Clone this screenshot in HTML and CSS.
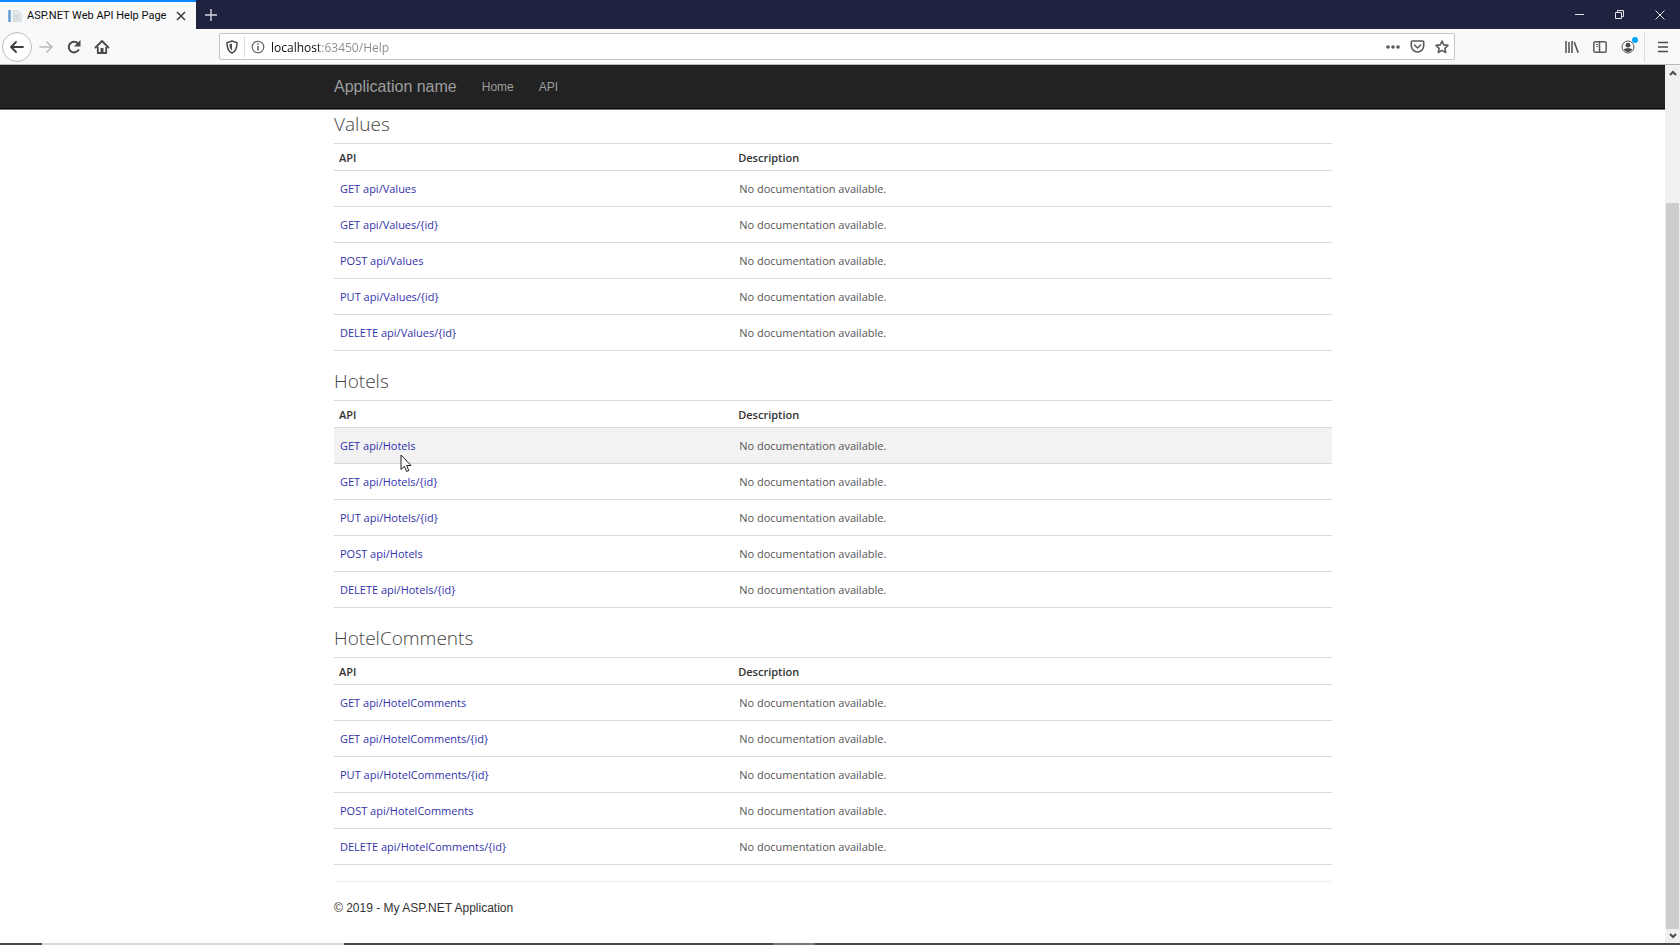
FILE: index.html
```html
<!DOCTYPE html>
<html lang="en">
<head>
<meta charset="utf-8">
<title>ASP.NET Web API Help Page</title>
<link rel="stylesheet" href="styles.css">
</head>
<body>
<div class="browser">
  <header class="chrome">
    <div class="tabstrip">
      <div class="tab">
        <svg class="favicon" width="14" height="14" viewBox="0 0 14 14"><path d="M1.500 1v12" stroke="#5b9bd0" stroke-width="2.400"/><path d="M5 1.500h5l3 3v8H5z" fill="#e6eaed" stroke="#d3dade"/><path d="M6 6h5M6 8h5M6 10h5" stroke="#c3cdd4"/></svg>
        <span class="tab-title">ASP.NET Web API Help Page</span>
        <button class="icon-btn" aria-label="Close tab"><svg width="10" height="10" viewBox="0 0 10 10"><path d="M1 1l8 8M9 1l-8 8" stroke="#3a3a3c" stroke-width="1.500"/></svg></button>
      </div>
      <button class="icon-btn new-tab" aria-label="New tab"><svg width="12" height="12" viewBox="0 0 12 12"><path d="M6 0v12M0 6h12" stroke="#d4d4dc" stroke-width="1.400"/></svg></button>
      <div class="window-controls">
        <button class="icon-btn" aria-label="Minimize"><svg width="10" height="10" viewBox="0 0 10 10"><path d="M0 4.500h9" stroke="#e4e4ea"/></svg></button>
        <button class="icon-btn" aria-label="Restore"><svg width="10" height="10" viewBox="0 0 10 10" fill="none" stroke="#e4e4ea"><path d="M.5 2.500h6v6h-6zM2.500 2.500v-2h6v6h-2"/></svg></button>
        <button class="icon-btn" aria-label="Close"><svg width="10" height="10" viewBox="0 0 10 10"><path d="M.5.5l9 9M9.500.5l-9 9" stroke="#e4e4ea"/></svg></button>
      </div>
    </div>
    <div class="toolbar">
      <div class="nav-buttons">
        <button class="icon-btn back" aria-label="Back"><svg width="16" height="14" viewBox="0 0 16 14" fill="none" stroke="#3c3c3e" stroke-width="1.800" stroke-linecap="round" stroke-linejoin="round"><path d="M14 7H2M7 2L2 7l5 5"/></svg></button>
        <button class="icon-btn nav-btn" aria-label="Forward" disabled><svg width="16" height="14" viewBox="0 0 16 14" fill="none" stroke="#b9b9bb" stroke-width="1.600" stroke-linecap="round" stroke-linejoin="round"><path d="M2 7h12M9 2l5 5-5 5"/></svg></button>
        <button class="icon-btn nav-btn" aria-label="Reload"><svg width="16" height="16" viewBox="0 0 16 16"><path d="M12.500 11A5.300 5.300 0 1 1 12 4.500" fill="none" stroke="#4a4a4c" stroke-width="2" stroke-linecap="round"/><path d="M14.500 1v6.500H8z" fill="#4a4a4c"/></svg></button>
        <button class="icon-btn nav-btn" aria-label="Home"><svg width="16" height="16" viewBox="0 0 16 16"><path d="M1.500 8.500L8 2l6.500 6.500" fill="none" stroke="#4a4a4c" stroke-width="1.800" stroke-linecap="round" stroke-linejoin="round"/><path d="M3.800 8v6h8.400V8" fill="none" stroke="#4a4a4c" stroke-width="1.800" stroke-linejoin="round"/><path d="M6.500 9h3v5h-3z" fill="#4a4a4c"/></svg></button>
      </div>
      <div class="urlbar">
        <button class="icon-btn shield" aria-label="Tracking protection"><svg width="12" height="14" viewBox="0 0 12 14"><path d="M6 1c2 1 3.500 1.300 5 1.400C11 8 9.500 11.500 6 13 2.500 11.500 1 8 1 2.400 2.500 2.300 4 2 6 1z" fill="none" stroke="#4a4a4c" stroke-width="1.500" stroke-linejoin="round"/><path d="M6 3.500v7C4.200 9.300 3.500 7 3.400 4.200 4.500 4.100 5.200 3.900 6 3.500z" fill="#4a4a4c"/></svg></button>
        <button class="icon-btn info" aria-label="Site information"><svg width="14" height="14" viewBox="0 0 14 14"><circle cx="7" cy="7" r="5.800" fill="none" stroke="#58585a" stroke-width="1.100"/><path d="M7 6v4.500M7 3.300v1.500" stroke="#58585a" stroke-width="1.500"/></svg></button>
        <input class="url" type="text" aria-label="Address" value="localhost:63450/Help">
        <div class="url-actions">
          <button class="icon-btn" aria-label="Page actions"><svg width="14" height="4" viewBox="0 0 14 4" fill="#5a5a5c"><circle cx="2" cy="2" r="1.800"/><circle cx="7" cy="2" r="1.800"/><circle cx="12" cy="2" r="1.800"/></svg></button>
          <button class="icon-btn" aria-label="Save to Pocket"><svg width="15" height="13" viewBox="0 0 14 13" fill="none" stroke="#5a5a5c" stroke-width="1.600" stroke-linecap="round" stroke-linejoin="round"><path d="M1.800 1h10.400a1 1 0 0 1 1 1v3.800a6.200 6.200 0 0 1-12.400 0V2a1 1 0 0 1 1-1z"/><path d="M4 5l3 3 3-3"/></svg></button>
          <button class="icon-btn" aria-label="Bookmark"><svg width="14" height="14" viewBox="0 0 14 14" fill="none" stroke="#5a5a5c" stroke-width="1.600" stroke-linejoin="round"><path d="M7 1l1.800 3.900 4.200.5-3.100 2.900.8 4.200L7 10.400l-3.700 2.100.8-4.200L1 5.400l4.200-.5z"/></svg></button>
        </div>
      </div>
      <div class="tools">
        <button class="icon-btn" aria-label="Library"><svg width="14" height="12" viewBox="0 0 14 12" fill="none" stroke="#4e4e50" stroke-width="1.500"><path d="M1 0v12M4 1v11M7 0v12M9.200 1l4 10.800"/></svg></button>
        <button class="icon-btn" aria-label="Sidebars"><svg width="14" height="12" viewBox="0 0 14 12" fill="none" stroke="#5a5a5c" stroke-width="1.500"><rect x=".8" y=".8" width="12.400" height="10.400" rx="1.500"/><path d="M6.500 1v10"/><path d="M3 3.500h2M3.500 5.500H5" stroke-width="1"/></svg></button>
        <button class="icon-btn account" aria-label="Account"><svg width="14" height="14" viewBox="0 0 14 14"><circle cx="7" cy="7" r="6" fill="none" stroke="#5a5a5c"/><circle cx="7" cy="5.200" r="2.400" fill="#4a4a4c"/><path d="M2.800 9.500c1.200-1.600 7.200-1.600 8.400 0-.8 1.500-2.400 2.400-4.200 2.400s-3.400-.9-4.200-2.400z" fill="#4a4a4c"/></svg><span class="dot"></span></button>
        <button class="icon-btn menu" aria-label="Open menu"><svg width="10" height="12" viewBox="0 0 10 12" stroke="#4a4a4c" stroke-width="1.600"><path d="M0 1.500h10M0 6h10M0 10.500h10"/></svg></button>
      </div>
    </div>
  </header>

  <div class="viewport">
    <div class="page">
      <nav class="navbar">
        <div class="container navbar-inner">
          <a class="brand" href="#">Application name</a>
          <a class="nav-link" href="#">Home</a>
          <a class="nav-link" href="#">API</a>
        </div>
      </nav>
      <main class="container">
        <section class="group">
          <h2 class="group-title">Values</h2>
          <table class="api-table">
            <thead><tr><th>API</th><th>Description</th></tr></thead>
            <tbody>
              <tr><td><a href="#">GET api/Values</a></td><td>No documentation available.</td></tr>
              <tr><td><a href="#">GET api/Values/{id}</a></td><td>No documentation available.</td></tr>
              <tr><td><a href="#">POST api/Values</a></td><td>No documentation available.</td></tr>
              <tr><td><a href="#">PUT api/Values/{id}</a></td><td>No documentation available.</td></tr>
              <tr><td><a href="#">DELETE api/Values/{id}</a></td><td>No documentation available.</td></tr>
            </tbody>
          </table>
        </section>
        <section class="group">
          <h2 class="group-title">Hotels</h2>
          <table class="api-table">
            <thead><tr><th>API</th><th>Description</th></tr></thead>
            <tbody>
              <tr class="hovered"><td><a href="#">GET api/Hotels</a></td><td>No documentation available.</td></tr>
              <tr><td><a href="#">GET api/Hotels/{id}</a></td><td>No documentation available.</td></tr>
              <tr><td><a href="#">PUT api/Hotels/{id}</a></td><td>No documentation available.</td></tr>
              <tr><td><a href="#">POST api/Hotels</a></td><td>No documentation available.</td></tr>
              <tr><td><a href="#">DELETE api/Hotels/{id}</a></td><td>No documentation available.</td></tr>
            </tbody>
          </table>
        </section>
        <section class="group">
          <h2 class="group-title">HotelComments</h2>
          <table class="api-table">
            <thead><tr><th>API</th><th>Description</th></tr></thead>
            <tbody>
              <tr><td><a href="#">GET api/HotelComments</a></td><td>No documentation available.</td></tr>
              <tr><td><a href="#">GET api/HotelComments/{id}</a></td><td>No documentation available.</td></tr>
              <tr><td><a href="#">PUT api/HotelComments/{id}</a></td><td>No documentation available.</td></tr>
              <tr><td><a href="#">POST api/HotelComments</a></td><td>No documentation available.</td></tr>
              <tr><td><a href="#">DELETE api/HotelComments/{id}</a></td><td>No documentation available.</td></tr>
            </tbody>
          </table>
        </section>
        <footer class="footer">© 2019 - My ASP.NET Application</footer>
      </main>
    </div>
    <div class="scrollbar" aria-hidden="true">
      <svg class="arrow" width="8" height="6" viewBox="0 0 8 6"><path d="M1 5l3-3 3 3" fill="none" stroke="#4d4d4d" stroke-width="2"/></svg>
      <div class="track"><div class="thumb"></div></div>
      <svg class="arrow" width="8" height="6" viewBox="0 0 8 6"><path d="M1 1l3 3 3-3" fill="none" stroke="#4d4d4d" stroke-width="2"/></svg>
    </div>
  </div>
  <div class="taskbar"><span class="task-search"></span><span class="task-active"></span></div>
</div>
<svg class="cursor" width="12" height="19" viewBox="0 0 12 19"><path d="M1 1v14.500l3.400-3.200 2.200 5.200 2.200-1-2.200-5h4.400z" fill="#fff" stroke="#222" stroke-linejoin="round"/></svg>
</body>
</html>
```
FILE: styles.css
```css
* { box-sizing: border-box; }

body {
  margin: 0;
  background: #fff;
  color: #333;
  font-family: "Open Sans", "Noto Sans", sans-serif;
  font-size: 11px;
}

a { text-decoration: none; }

.browser {
  display: flex;
  flex-direction: column;
  min-height: 100vh;
}

.icon-btn {
  display: flex;
  align-items: center;
  justify-content: center;
  padding: 0;
  border: 0;
  background: none;
}

/* Tabs */
.tabstrip {
  display: flex;
  align-items: center;
  height: 29px;
  background: #202340;
}

.tab {
  display: flex;
  align-items: center;
  gap: 5px;
  width: 196px;
  height: 29px;
  padding: 0 10px 0 8px;
  border-top: 2px solid #0a84ff;
  background: #f9f9fa;
}

.tab-title {
  flex: 1;
  color: #0c0c0d;
  font-family: Roboto, "Open Sans", sans-serif;
  font-size: 11px;
  white-space: nowrap;
}

.new-tab { width: 30px; height: 29px; }

.window-controls {
  display: flex;
  gap: 30px;
  margin-left: auto;
  padding-right: 15px;
}

/* Toolbar */
.toolbar {
  display: flex;
  align-items: center;
  height: 36px;
  border-bottom: 1px solid #b8b8ba;
  background: #f9f9fa;
}

.nav-buttons {
  display: flex;
  align-items: center;
  width: 219px;
  padding-left: 2px;
}

.back {
  width: 30px;
  height: 30px;
  border: 1px solid #bcbcbe;
  border-radius: 50%;
  background: #fff;
}

.nav-btn { width: 28px; height: 30px; }

.urlbar {
  display: flex;
  flex: 1;
  align-items: center;
  height: 27px;
  border: 1px solid #c4c4c6;
  border-radius: 2px;
  background: #fff;
}

.shield { width: 25px; height: 20px; border-right: 1px solid #dcdcde; }

.info { width: 26px; height: 20px; }

.url {
  flex: 1;
  min-width: 0;
  padding: 2px 0 0;
  border: 0;
  outline: 0;
  background: linear-gradient(90deg, #0c0c0d 48px, #8a8a8c 48px);
  background-clip: text;
  -webkit-background-clip: text;
  -webkit-text-fill-color: transparent;
  font: 12px "Open Sans", "Noto Sans", sans-serif;
}

.url-actions { display: flex; gap: 10px; padding-right: 5px; }

.tools {
  display: flex;
  align-items: center;
  gap: 14px;
  width: 225px;
  padding-right: 12px;
  justify-content: flex-end;
}

.account { position: relative; }

.dot {
  position: absolute;
  top: -3px;
  right: -3px;
  width: 6px;
  height: 6px;
  border-radius: 50%;
  background: #00a3f5;
}

.menu { height: 30px; padding-left: 13px; border-left: 1px solid #dcdcde; margin-left: -5px; }

/* Page */
.viewport { display: flex; flex: 1; }

.page { flex: 1; min-width: 0; }

.container { width: 60%; margin: 0 auto; padding-left: 1px; }

.navbar {
  background: #222;
  border-bottom: 1px solid #080808;
  box-shadow: 0 1px #777;
  font-family: "Liberation Sans", Arial, sans-serif;
  font-size: 12px;
}

.navbar-inner {
  display: flex;
  align-items: center;
  height: 43px;
}

.brand { margin-right: 25px; color: #9d9d9d; font-size: 16px; }

.nav-link { margin-right: 25px; color: #9d9d9d; }

.group { margin-bottom: 15px; }

.group-title {
  margin: 0;
  padding-bottom: 4px;
  color: #444;
  font-size: 19px;
  font-weight: 300;
  line-height: 30px;
}

.api-table {
  width: 100%;
  border-collapse: collapse;
  border-top: 1px solid #d9d9d9;
  table-layout: fixed;
}

.api-table tr { border-bottom: 1px solid #d9d9d9; }

.api-table th {
  height: 27px;
  padding: 0 5px;
  font-weight: 600;
  text-align: left;
}

.api-table th:first-child { width: 40%; }

.api-table td {
  height: 36px;
  padding: 0 6px;
  color: #555;
  font-weight: 400;
}

.api-table a { color: #33a; }

.hovered { background: #f2f2f3; }

.footer {
  margin-top: 16px;
  padding: 17px 0;
  border-top: 1px solid #eee;
  font-family: "Liberation Sans", Arial, sans-serif;
  font-size: 12px;
  line-height: 18px;
}

/* Scrollbar */
.scrollbar {
  display: flex;
  flex-direction: column;
  align-items: center;
  width: 15px;
  padding: 5px 0 4px;
  background: #f0f0f0;
}

.arrow { flex: none; }

.track {
  display: grid;
  flex: 1;
  grid-template-rows: 17fr 100fr;
  width: 13px;
  padding: 4px 0;
}

.thumb { grid-row: 2; background: #cdcdcd; }

.taskbar { display: flex; height: 2px; background: #4a4a4a; }

.task-search { width: 18%; margin-left: 2.5%; background: #d8d8d8; }

.task-active { width: 2.5%; margin-left: 25.5%; background: #777; }

.cursor { position: absolute; left: 400px; top: 454px; }
```
